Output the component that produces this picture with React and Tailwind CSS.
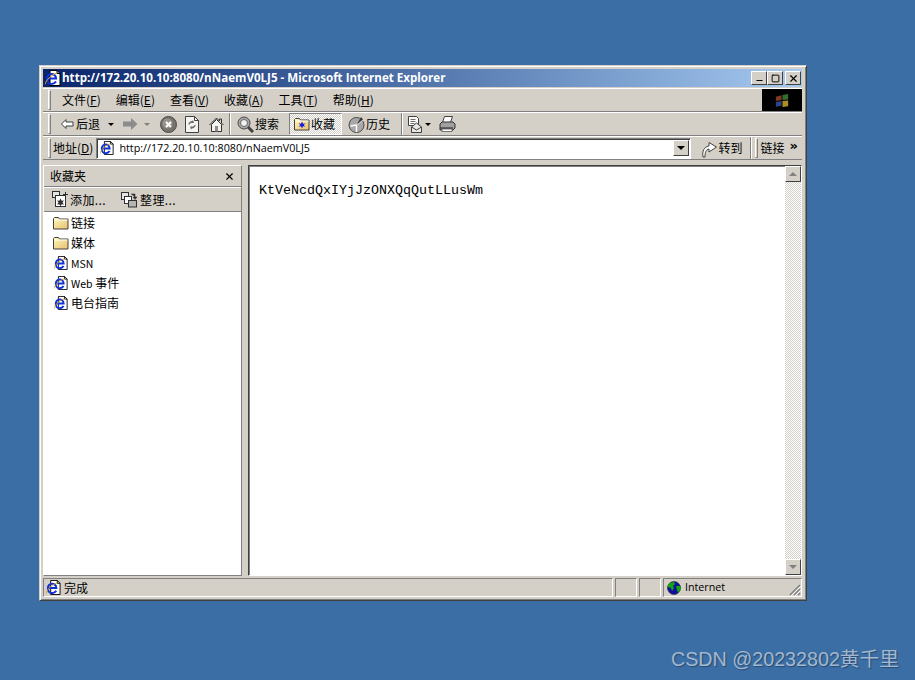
import React from "react";
import { Minus, Square, X } from "lucide-react";

const ui = "font-['Noto_Sans_CJK_SC','Noto_Sans',sans-serif]";

// raised grip at the left of each toolbar band
function Grip() {
  return <div className="w-[3px] h-[20px] border-l border-t border-white border-r border-b border-r-[#808080] border-b-[#808080] shrink-0" />;
}

function Sep() {
  return <div className="w-[2px] h-[22px] border-l border-[#808080] bg-white shrink-0" />;
}

function IePage({ size = 16 }) {
  return (
    <svg width={size} height={size} viewBox="0 0 16 16" className="shrink-0">
      <path d="M5 .5h7l3 3v12H5z" fill="#fff" stroke="#000" />
      <path d="M12 .5v3h3" fill="none" stroke="#000" />
      <path d="M2.500 8.500h8.500C11 5 8 4 6.500 4 4 4 2 6 2 9s2 5 4.500 5c2 0 3.500-1 4.500-2.500" fill="none" stroke="#1030d8" strokeWidth="2.200" />
      <path d="M0 14.500C1 10 6 5 12 3" fill="none" stroke="#d8a818" strokeWidth="1" />
    </svg>
  );
}

function Folder({ star }) {
  return (
    <svg width="16" height="14" viewBox="0 0 16 14" className="shrink-0">
      <defs>
        <linearGradient id="folderFill" x1="0" y1="0" x2="1" y2="1">
          <stop offset="0" stopColor="#fff8b8" />
          <stop offset="1" stopColor="#e8c070" />
        </linearGradient>
      </defs>
      <path d="M.5 13V2.500l1-1h4l1 1.500h8.500v10z" fill="url(#folderFill)" stroke="#404040" />
      <path d="M1.500 4h13" stroke="#fff" />
      {star && <path d="M8 4.500l1 2.200 2.300-.5-1.500 1.800 1.500 1.800-2.300-.5-1 2.200-1-2.200-2.300.5 1.500-1.800-1.500-1.800 2.300.5z" fill="#1a1ae0" />}
    </svg>
  );
}

function BackArrow() {
  return (
    <svg width="14" height="12" viewBox="0 0 14 12">
      <path d="M6 1.500L1.500 6 6 10.500V8h7V4H6z" fill="#fff" stroke="#404040" />
    </svg>
  );
}

function ForwardArrow() {
  return (
    <svg width="15" height="12" viewBox="0 0 15 12">
      <path d="M8 0l6.500 6L8 12V8.500H0v-5h8z" fill="#8c8c8c" />
    </svg>
  );
}

function StopIcon() {
  return (
    <svg width="17" height="17" viewBox="0 0 17 17">
      <circle cx="8.500" cy="8.500" r="8" fill="#77736c" stroke="#4a4a4a" />
      <circle cx="7.500" cy="7.500" r="5" fill="#97938c" />
      <path d="M6 6l5 5M11 6l-5 5" stroke="#fff" strokeWidth="2" />
    </svg>
  );
}

function RefreshIcon() {
  return (
    <svg width="14" height="17" viewBox="0 0 14 17">
      <path d="M.5.500h9l4 4v12H.5z" fill="#f4f4f0" stroke="#404040" />
      <path d="M9.500.500v4h4" fill="none" stroke="#404040" />
      <path d="M4 8.500a3 3 0 0 1 4-2.500M10 9a3 3 0 0 1-4 2.500" fill="none" stroke="#6b6b6b" strokeWidth="1.500" />
      <path d="M8 4l1 3-3 0zM6 13.500l-1-3 3 0z" fill="#6b6b6b" />
    </svg>
  );
}

function HomeIcon() {
  return (
    <svg width="15" height="15" viewBox="0 0 15 15">
      <path d="M.5 8L7.500 1l3 3V2h2v4l2 2" fill="none" stroke="#303030" />
      <path d="M2.500 7.500l5-5 5 5v7h-10z" fill="#f4f4f0" stroke="#303030" />
      <rect x="6" y="9" width="3" height="5.500" fill="#8c8c8c" />
    </svg>
  );
}

function SearchIcon() {
  return (
    <svg width="17" height="17" viewBox="0 0 17 17">
      <circle cx="7" cy="7" r="6" fill="#a8a8a8" stroke="#4a4a4a" />
      <circle cx="7" cy="7" r="3.500" fill="#f2f2f2" stroke="#666" />
      <path d="M11 11l5 5" stroke="#404040" strokeWidth="3" />
    </svg>
  );
}

function HistoryIcon() {
  return (
    <svg width="17" height="17" viewBox="0 0 17 17">
      <circle cx="8.500" cy="9" r="7.500" fill="#a8a8a8" stroke="#4a4a4a" />
      <path d="M8.500 9L15 3.500M8.500 9l-6 1M8.500 9v7" stroke="#fff" strokeWidth="1.500" />
      <path d="M8.500 9L15 3.500l-2-2.500z" fill="#3a3a3a" />
    </svg>
  );
}

function MailIcon() {
  return (
    <svg width="16" height="17" viewBox="0 0 16 17">
      <path d="M.5.500h8l2 2v7h-10z" fill="#fff" stroke="#404040" />
      <path d="M2.500 3.500h5M2.500 5.500h5M2.500 7.500h4" stroke="#707070" />
      <path d="M3.500 11l5-4 5 4v5.500h-10z" fill="#e8e8e4" stroke="#404040" />
      <path d="M3.500 11l5 3 5-3" fill="none" stroke="#404040" />
    </svg>
  );
}

function PrintIcon() {
  return (
    <svg width="17" height="16" viewBox="0 0 17 16">
      <path d="M5.500.500h8l-2 6h-8z" fill="#fff" stroke="#404040" />
      <path d="M1 8l2-2h11l2 2v4l-2 2H1z" fill="#a0a0a0" stroke="#303030" />
      <path d="M1 12h13" stroke="#202020" />
      <rect x="3" y="13" width="10" height="2.500" fill="#fff" stroke="#404040" strokeWidth=".7" />
    </svg>
  );
}

function GoIcon() {
  return (
    <svg width="17" height="19" viewBox="0 0 17 19">
      <path d="M2 18C1 12 3 8 8 7V3.500L15.500 8 8 13V10C5 10.500 4 13 4 18z" fill="#fff" stroke="#404040" />
    </svg>
  );
}

function AddIcon() {
  return (
    <svg width="17" height="17" viewBox="0 0 17 17">
      <rect x=".5" y=".5" width="7" height="6" fill="#e4e4e0" stroke="#303030" />
      <rect x="3.500" y="4.500" width="10" height="11" fill="#fff" stroke="#303030" />
      <path d="M8.500 7.500l1.200 2.300 2.300-.3-1.500 2 1.500 2-2.300-.3-1.200 2-1.200-2-2.300.3 1.500-2-1.500-2 2.300.3z" fill="#303030" />
      <path d="M13.500 1v5M11 3.500h5" stroke="#303030" />
    </svg>
  );
}

function OrganizeIcon() {
  return (
    <svg width="17" height="17" viewBox="0 0 17 17">
      <rect x=".5" y="1.500" width="7" height="7" fill="#e4e4e0" stroke="#303030" />
      <rect x="3.500" y="5.500" width="7" height="7" fill="#fff" stroke="#303030" />
      <rect x="7.500" y="9.500" width="8" height="6.500" fill="#b4b4b0" stroke="#303030" />
      <path d="M10 3h4v3M12 6h4l-2 2.500z" fill="#303030" stroke="#303030" strokeWidth=".6" />
    </svg>
  );
}

function Globe() {
  return (
    <svg width="14" height="14" viewBox="0 0 14 14">
      <circle cx="7" cy="7" r="6.500" fill="#1010a0" stroke="#202020" strokeWidth=".6" />
      <path d="M3 2l4-1 1 2-2 2 1 2-2 3-1-3-3-1 0-2zM9 5l4 0 1 3-3 4-1-3z" fill="#10a810" />
    </svg>
  );
}

function WinFlag() {
  return (
    <svg width="17" height="17" viewBox="0 0 18 18" className="opacity-80">
      <path d="M2 5l6-1.500V8.500L2 9.500z" fill="#a04830" />
      <path d="M9 3.300L15 2v6l-6 .400z" fill="#3f8a38" />
      <path d="M2 10.500l6-.900v5l-6 .900z" fill="#3656a8" />
      <path d="M9 9.400l6-.400v6l-6 .800z" fill="#d8b030" />
    </svg>
  );
}

function TitleButton({ children }) {
  return (
    <div className="w-[16px] h-[14px] bg-[#d4d0c8] border border-t-white border-l-white border-r-[#404040] border-b-[#404040] flex items-center justify-center text-black">
      {children}
    </div>
  );
}

function MenuItem({ label, hot }) {
  return (
    <span className="mr-[15px]">
      {label}(<span className="underline">{hot}</span>)
    </span>
  );
}

function ToolButton({ icon, label, active }) {
  return (
    <div
      className={
        "flex items-center gap-[1px] h-[22px] pl-[4px] pr-[6px] " +
        (active
          ? "border border-t-[#808080] border-l-[#808080] border-r-white border-b-white bg-[repeating-conic-gradient(#d4d0c8_0_25%,#ffffff_0_50%)] bg-[length:2px_2px]"
          : "")
      }
    >
      {icon}
      {label && <span>{label}</span>}
    </div>
  );
}

function FavRow({ icon, children }) {
  return (
    <div className="flex items-center h-[20px] pl-[9px] gap-[2px]">
      <div className="w-[16px] flex justify-center">{icon}</div>
      <span>{children}</span>
    </div>
  );
}

function Caret({ color = "border-t-black" }) {
  return <div className={"w-0 h-0 border-x-[3px] border-x-transparent border-t-[3px] " + color} />;
}

function ScrollButton({ up }) {
  return (
    <div className="w-[16px] h-[16px] bg-[#d4d0c8] border border-t-white border-l-white border-r-[#404040] border-b-[#404040] flex items-center justify-center shrink-0">
      <div
        className={
          "w-0 h-0 border-x-[4px] border-x-transparent " +
          (up ? "border-b-[4px] border-b-[#808080]" : "border-t-[4px] border-t-[#808080]")
        }
      />
    </div>
  );
}

export default function App() {
  return (
    <div className={"relative w-[915px] h-[680px] overflow-hidden bg-[#3a6ea5] pl-[39px] pt-[65px] text-[12px] text-black " + ui}>
      <div className="w-[768px] h-[536px] bg-[#d4d0c8] border border-t-[#d4d0c8] border-l-[#d4d0c8] border-r-[#404040] border-b-[#404040] shadow-[inset_1px_1px_0_#fff,inset_-1px_-1px_0_#808080] p-[3px] pr-[4px] flex flex-col">
        {/* title bar */}
        <div className="h-[18px] shrink-0 flex items-center pl-[2px] pr-[1px] bg-linear-to-r from-[#0a246a] to-[#a6caf0]">
          <IePage size={16} />
          <span className="ml-[1px] text-white font-bold text-[11.6px] font-['Open_Sans',sans-serif] whitespace-nowrap">
            http://172.20.10.10:8080/nNaemV0LJ5 - Microsoft Internet Explorer
          </span>
          <div className="ml-auto flex items-center">
            <TitleButton><Minus size={9} strokeWidth={3} className="mt-[5px]" /></TitleButton>
            <TitleButton><Square size={9} strokeWidth={2.5} /></TitleButton>
            <div className="ml-[2px]"><TitleButton><X size={11} strokeWidth={2.5} /></TitleButton></div>
          </div>
        </div>

        {/* menu band */}
        <div className="h-[24px] mt-[1px] shrink-0 flex items-center border-t border-b border-t-white border-b-[#808080] pl-[5px]">
          <Grip />
          <div className="ml-[11px] flex items-center">
            <MenuItem label="文件" hot="F" />
            <MenuItem label="编辑" hot="E" />
            <MenuItem label="查看" hot="V" />
            <MenuItem label="收藏" hot="A" />
            <MenuItem label="工具" hot="T" />
            <MenuItem label="帮助" hot="H" />
          </div>
          <div className="ml-auto w-[40px] h-[22px] bg-black flex items-center justify-center">
            <WinFlag />
          </div>
        </div>

        {/* standard buttons */}
        <div className="h-[24px] shrink-0 flex items-center border-t border-b border-t-white border-b-[#808080] pl-[5px]">
          <Grip />
          <div className="ml-[9px] flex items-center gap-[2px]"><BackArrow /><span>后退</span></div>
          <div className="ml-[8px]"><Caret /></div>
          <div className="ml-[9px]"><ForwardArrow /></div>
          <div className="ml-[6px]"><Caret color="border-t-[#808080]" /></div>
          <div className="ml-[10px]"><StopIcon /></div>
          <div className="ml-[8px]"><RefreshIcon /></div>
          <div className="ml-[10px]"><HomeIcon /></div>
          <div className="ml-[5px]"><Sep /></div>
          <div className="ml-[2px]"><ToolButton icon={<SearchIcon />} label="搜索" /></div>
          <div className="ml-[4px]"><ToolButton active icon={<Folder star />} label="收藏" /></div>
          <div className="ml-[2px]"><ToolButton icon={<HistoryIcon />} label="历史" /></div>
          <div className="ml-[5px]"><Sep /></div>
          <div className="ml-[5px] flex items-center gap-[1px]"><MailIcon /><Caret /></div>
          <div className="ml-[8px]"><PrintIcon /></div>
        </div>

        {/* address band */}
        <div className="h-[24px] shrink-0 flex items-center border-t border-b border-t-white border-b-[#808080] pl-[5px]">
          <Grip />
          <span className="ml-[2px]">地址(<span className="underline">D</span>)</span>
          <div className="ml-[3px] w-[595px] h-[21px] bg-white border border-t-[#808080] border-l-[#808080] border-r-white border-b-white shadow-[inset_1px_1px_0_#404040] flex items-center pl-[3px] pr-[1px]">
            <IePage size={14} />
            <span className="ml-[5px] text-[10.75px] font-['Open_Sans',sans-serif] whitespace-nowrap">http://172.20.10.10:8080/nNaemV0LJ5</span>
            <div className="ml-auto w-[16px] h-[16px] bg-[#d4d0c8] border border-t-white border-l-white border-r-[#404040] border-b-[#404040] flex items-center justify-center">
              <div className="w-0 h-0 border-x-[4px] border-x-transparent border-t-[4px] border-t-black" />
            </div>
          </div>
          <div className="ml-[10px] flex items-center"><GoIcon /><span>转到</span></div>
          <div className="ml-[8px]"><Sep /></div>
          <div className="ml-[3px]"><Grip /></div>
          <span className="ml-[2px]">链接</span>
          <span className="ml-[5px] -mt-[5px] font-bold text-[13px] font-['DejaVu_Sans',sans-serif]">»</span>
        </div>

        {/* panels */}
        <div className="flex-1 min-h-0 flex mt-[5px] gap-[6px]">
          <div className="w-[199px] flex flex-col border border-t-white border-l-white border-r-[#808080] border-b-[#808080]">
            <div className="h-[21px] shrink-0 flex items-center justify-between pl-[6px] pr-[6px] border-b border-[#808080]">
              <span>收藏夹</span>
              <X size={11} strokeWidth={2.5} />
            </div>
            <div className="h-[25px] shrink-0 flex items-center pl-[8px] border-t border-white border-b border-b-[#808080]">
              <AddIcon />
              <span className="ml-[1px] tracking-[0.4px]">添加...</span>
              <div className="ml-[15px]"><OrganizeIcon /></div>
              <span className="ml-[2px] tracking-[0.4px]">整理...</span>
            </div>
            <div className="flex-1 bg-white pt-[1px]">
              <FavRow icon={<Folder />}>链接</FavRow>
              <FavRow icon={<Folder />}>媒体</FavRow>
              <FavRow icon={<IePage size={14} />}><span className="text-[10.5px]">MSN</span></FavRow>
              <FavRow icon={<IePage size={14} />}><span className="text-[10.5px]">Web</span> 事件</FavRow>
              <FavRow icon={<IePage size={14} />}>电台指南</FavRow>
            </div>
          </div>

          <div className="flex-1 flex bg-white border border-t-[#404040] border-l-[#404040] border-r-white border-b-white shadow-[inset_1px_1px_0_#808080]">
            <div className="flex-1 pl-[10px] pt-[16px] font-['Liberation_Mono',monospace] text-[13.33px] leading-[18px]">
              KtVeNcdQxIYjJzONXQqQutLLusWm
            </div>
            <div className="w-[16px] flex flex-col bg-[repeating-conic-gradient(#d4d0c8_0_25%,#ffffff_0_50%)] bg-[length:2px_2px]">
              <ScrollButton up />
              <div className="flex-1" />
              <ScrollButton />
            </div>
          </div>
        </div>

        {/* status bar */}
        <div className="h-[19px] mt-[2px] shrink-0 flex items-stretch">
          <div className="flex-1 flex items-center pl-[2px] gap-[3px] border border-t-[#808080] border-l-[#808080] border-r-white border-b-white">
            <IePage size={15} />
            <span>完成</span>
          </div>
          <div className="w-[22px] ml-[2px] border border-t-[#808080] border-l-[#808080] border-r-white border-b-white" />
          <div className="w-[22px] ml-[2px] border border-t-[#808080] border-l-[#808080] border-r-white border-b-white" />
          <div className="w-[139px] ml-[2px] relative flex items-center pl-[3px] gap-[4px] border border-t-[#808080] border-l-[#808080] border-r-white border-b-white">
            <Globe />
            <span className="text-[10.7px] font-['Open_Sans',sans-serif]">Internet</span>
            <svg width="12" height="12" viewBox="0 0 12 12" className="absolute right-0 bottom-0">
              <path d="M11 1L1 11M11 5L5 11M11 9L9 11" stroke="#808080" strokeWidth="1.5" />
              <path d="M12 2L2 12M12 6L6 12" stroke="#fff" />
            </svg>
          </div>
        </div>
      </div>

      {/* CSDN watermark */}
      <span className="absolute left-[671px] top-[647px] text-[19.7px] leading-[24px] text-[#a3b8cf] [text-shadow:1px_1px_1px_#2a4a70] font-['Liberation_Sans','Noto_Sans_CJK_SC',sans-serif] whitespace-nowrap">
        CSDN @20232802黄千里
      </span>
    </div>
  );
}
